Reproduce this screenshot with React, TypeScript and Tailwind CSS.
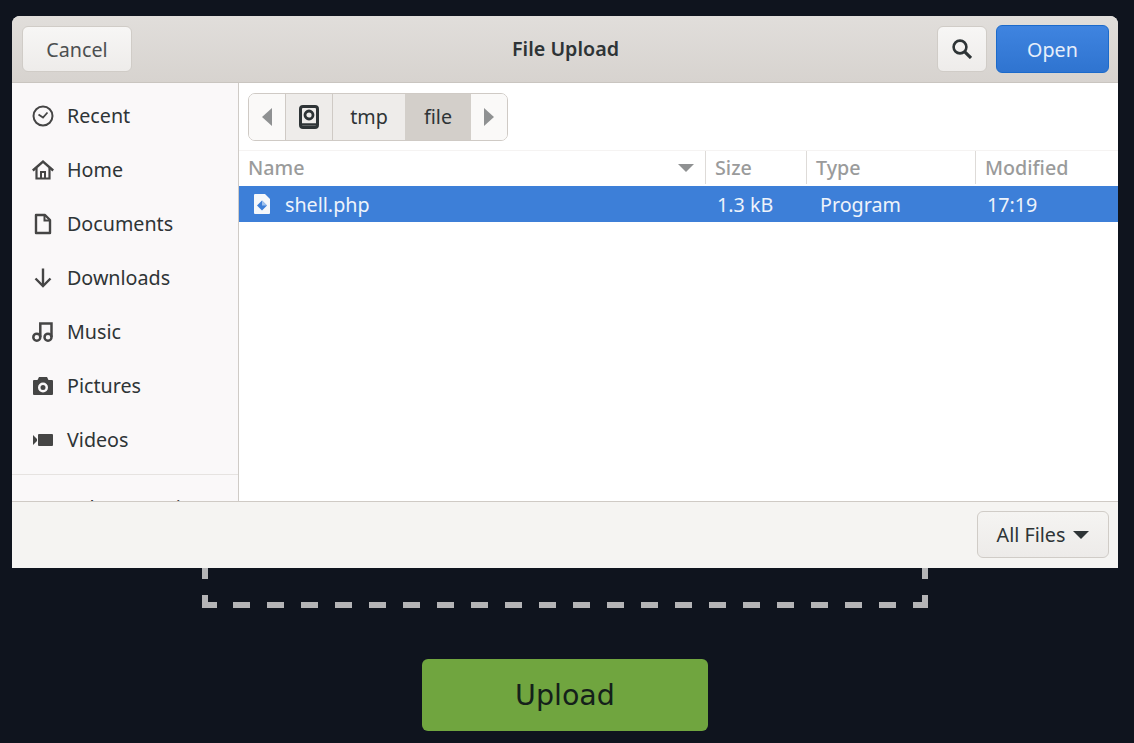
import React from 'react';

const Recent = () => (
  <svg width="22" height="22" viewBox="0 0 22 22" fill="none" stroke="#454545" strokeWidth="2">
    <circle cx="11" cy="11" r="9.5" />
    <path d="M6.5 9.5 L11 12.5 L15.5 7.5" strokeWidth="1.8" />
  </svg>
);

const Home = () => (
  <svg width="22" height="22" viewBox="0 0 22 22" fill="none" stroke="#454545" strokeWidth="2.4">
    <path d="M0.8 11.5 L11 2.5 L21.2 11.5" />
    <path d="M4.5 9 V19.5 H17.5 V9" strokeWidth="2.2" />
    <path d="M9 19 V13 H13 V19" strokeWidth="2" />
  </svg>
);

const Doc = () => (
  <svg width="22" height="22" viewBox="0 0 22 22" fill="none" stroke="#454545" strokeWidth="2.4">
    <path d="M4 2 H13 L18 7 V20 H4 Z" strokeLinejoin="round" />
    <path d="M12.5 2 V7.5 H18" strokeWidth="2" />
  </svg>
);

const Down = () => (
  <svg width="22" height="22" viewBox="0 0 22 22" fill="none" stroke="#454545" strokeWidth="2.4">
    <path d="M11 1.5 V19" />
    <path d="M3.5 11.5 L11 19 L18.5 11.5" />
  </svg>
);

const Music = () => (
  <svg width="22" height="22" viewBox="0 0 22 22" fill="none" stroke="#454545" strokeWidth="2.5">
    <circle cx="4.8" cy="16.2" r="3.5" />
    <circle cx="16" cy="16.2" r="3.5" />
    <path d="M8.3 16 V2.5 H19.5 V16" />
  </svg>
);

const Camera = () => (
  <svg width="22" height="22" viewBox="0 0 22 22" fill="#454545">
    <path
      fillRule="evenodd"
      d="M7 2 H15 L16.5 5 H20 Q21 5 21 6 V19 Q21 20 20 20 H2 Q1 20 1 19 V6 Q1 5 2 5 H5.5 Z M11 7.5 A5 5 0 1 0 11 17.5 A5 5 0 1 0 11 7.5 Z M11 10 A2.5 2.5 0 1 1 11 15 A2.5 2.5 0 1 1 11 10 Z"
    />
  </svg>
);

const Video = () => (
  <svg width="22" height="22" viewBox="0 0 22 22" fill="#454545">
    <path d="M1 6 L5 10 V12 L1 16 Z" />
    <rect x="6" y="5" width="15" height="12" rx="1" />
  </svg>
);

const DiskIcon = () => (
  <svg width="20" height="24" viewBox="0 0 20 24" fill="none" stroke="#2e3436" strokeWidth="3">
    <rect x="1.5" y="1.5" width="17" height="21" rx="2.5" />
    <circle cx="10" cy="10" r="4" strokeWidth="2.8" />
    <path d="M3 19.5 H17" strokeWidth="2.4" />
  </svg>
);

const SearchIcon = () => (
  <svg width="20" height="20" viewBox="0 0 20 20" fill="none" stroke="#2e3436">
    <circle cx="8" cy="8" r="6.4" strokeWidth="2.6" />
    <path d="M12.8 12.8 L19 19" strokeWidth="3.2" />
  </svg>
);

const FileIcon = () => (
  <svg width="18" height="22" viewBox="0 0 18 22">
    <path d="M2 1 H12 L17 6 V20 Q17 21 16 21 H2 Q1 21 1 20 V2 Q1 1 2 1 Z" fill="#f5f7fa" />
    <path d="M9 7.5 L14 12.5 L9 17.5 L4 12.5 Z" fill="#3d7fd8" />
    <path d="M9 7.5 L14 12.5 L9 12.5 Z" fill="#9fc2ee" />
  </svg>
);

const places = [
  { label: 'Recent', icon: <Recent /> },
  { label: 'Home', icon: <Home /> },
  { label: 'Documents', icon: <Doc /> },
  { label: 'Downloads', icon: <Down /> },
  { label: 'Music', icon: <Music /> },
  { label: 'Pictures', icon: <Camera /> },
  { label: 'Videos', icon: <Video /> },
];

const Sidebar = () => (
  <div className="w-[227px] shrink-0 overflow-hidden border-r border-[#cfcbc7] bg-[#faf8f9] pt-[6px]">
    {places.map((p) => (
      <div key={p.label} className="flex h-[54px] items-center text-[#2e3436]">
        <div className="ml-[20px] flex w-[35px] shrink-0 items-center">{p.icon}</div>
        <span>{p.label}</span>
      </div>
    ))}
    <div className="mt-[7px] border-t border-[#e6e3e1] pt-[18px] pl-[55px] text-[#2e3436]">Other Locations</div>
  </div>
);

const PathBar = () => (
  <div className="flex h-[67px] items-center pl-[9px]">
    <div className="flex h-[48px] overflow-hidden rounded-[7px] border border-[#cfcac5] text-[#2e3436]">
      <div className="flex w-[37px] items-center justify-center border-r border-[#cfcac5] bg-[#faf9f8]">
        <div className="h-0 w-0 border-y-[9px] border-r-[10px] border-y-transparent border-r-[#8f9192]" />
      </div>
      <div className="flex w-[47px] items-center justify-center border-r border-[#cfcac5] bg-[#eeecea]">
        <DiskIcon />
      </div>
      <div className="flex w-[72px] items-center justify-center bg-[#eeecea]">tmp</div>
      <div className="flex w-[66px] items-center justify-center bg-[#d3cfca]">file</div>
      <div className="flex w-[36px] items-center justify-center bg-[#faf9f8]">
        <div className="h-0 w-0 border-y-[9px] border-l-[10px] border-y-transparent border-l-[#8f9192]" />
      </div>
    </div>
  </div>
);

const FileList = () => (
  <div className="flex min-w-0 flex-1 flex-col bg-white">
    <PathBar />
    <div className="flex h-[36px] border-t border-[#f5f3f2] pb-[2px] font-medium text-[#9a9b9b]">
      <div className="flex w-[467px] items-center justify-between border-r border-[#dedbd8] pr-[11px] pl-[9px]">
        <span>Name</span>
        <div className="h-0 w-0 border-x-[8px] border-t-[8px] border-x-transparent border-t-[#8f9192]" />
      </div>
      <div className="flex w-[101px] items-center border-r border-[#dedbd8] pl-[9px]">Size</div>
      <div className="flex w-[169px] items-center border-r border-[#dedbd8] pl-[9px]">Type</div>
      <div className="flex flex-1 items-center pl-[9px]">Modified</div>
    </div>
    <div className="flex h-[36px] items-center bg-[#3d7fd8] pt-[1px] text-[#eef3fb]">
      <div className="flex w-[467px] items-center pl-[14px]">
        <FileIcon />
        <span className="ml-[14px]">shell.php</span>
      </div>
      <div className="w-[103px] pl-[11px]">1.3 kB</div>
      <div className="w-[167px] pl-[11px]">Program</div>
      <div className="pl-[11px]">17:19</div>
    </div>
  </div>
);

const Dialog = () => (
  <div className="absolute top-[16px] left-[12px] flex h-[552px] w-[1106px] flex-col overflow-hidden rounded-t-[8px] bg-[#f5f4f2] font-['Noto_Sans',sans-serif] text-[19.7px]">
    <div className="flex h-[67px] shrink-0 items-center justify-between border-b border-[#c9c5c0] bg-gradient-to-b from-[#e1dedb] to-[#d7d3cf] pr-[9px] pl-[10px]">
      <button className="h-[46px] w-[110px] rounded-[6px] border border-[#d0ccc7] bg-gradient-to-b from-[#f7f6f5] to-[#eeecea] pt-[1px] text-[#4c4f50]">
        Cancel
      </button>
      <span className="ml-[62px] font-semibold text-[#2e3436]">File Upload</span>
      <div className="flex items-center gap-[9px]">
        <button className="flex h-[46px] w-[50px] items-center justify-center rounded-[6px] border border-[#d0ccc7] bg-gradient-to-b from-[#f7f6f5] to-[#eeecea]">
          <SearchIcon />
        </button>
        <button className="h-[48px] w-[113px] rounded-[6px] border border-[#1b6acb] bg-gradient-to-b from-[#3f84e0] to-[#2f74d0] pt-[1px] text-[#e6eefa]">
          Open
        </button>
      </div>
    </div>
    <div className="flex min-h-0 flex-1">
      <Sidebar />
      <FileList />
    </div>
    <div className="flex h-[67px] shrink-0 items-center justify-end border-t border-[#cfcac5] pr-[9px] pb-[2px]">
      <button className="flex h-[47px] w-[132px] items-center justify-center gap-[8px] rounded-[6px] border border-[#d0ccc7] bg-gradient-to-b from-[#f5f4f2] to-[#edebe9] pt-[1px] text-[#2e3436]">
        All Files
        <span className="h-0 w-0 border-x-[8px] border-t-[8px] border-x-transparent border-t-[#2e3436]" />
      </button>
    </div>
  </div>
);

// dashes run 17 on / 17 off, with L-shaped corners along the bottom
const DropOutline = () => (
  <svg className="absolute inset-0" width="726" height="408" viewBox="0 0 726 408" fill="none" stroke="#b4b4b6" strokeWidth="6">
    <path d="M3 379 L3 0" strokeDasharray="17 17" />
    <path d="M723 379 L723 0" strokeDasharray="17 17" />
    <path d="M31 405 L695 405" strokeDasharray="17 17" />
    <path d="M3 395 V405 H15" />
    <path d="M723 395 V405 H711" />
  </svg>
);

export default function App() {
  return (
    <div className="relative flex h-[743px] w-[1134px] flex-col items-center overflow-hidden bg-[#0f141e] pt-[200px]">
      <div className="relative ml-[-4px] h-[408px] w-[726px]">
        <DropOutline />
      </div>
      <button className="mt-[51px] ml-[-4px] h-[72px] w-[286px] rounded-[6px] bg-[#70a53f] pt-[3px] font-['DejaVu_Sans',sans-serif] text-[28.5px] text-[#14201a]">
        Upload
      </button>
      <Dialog />
    </div>
  );
}
